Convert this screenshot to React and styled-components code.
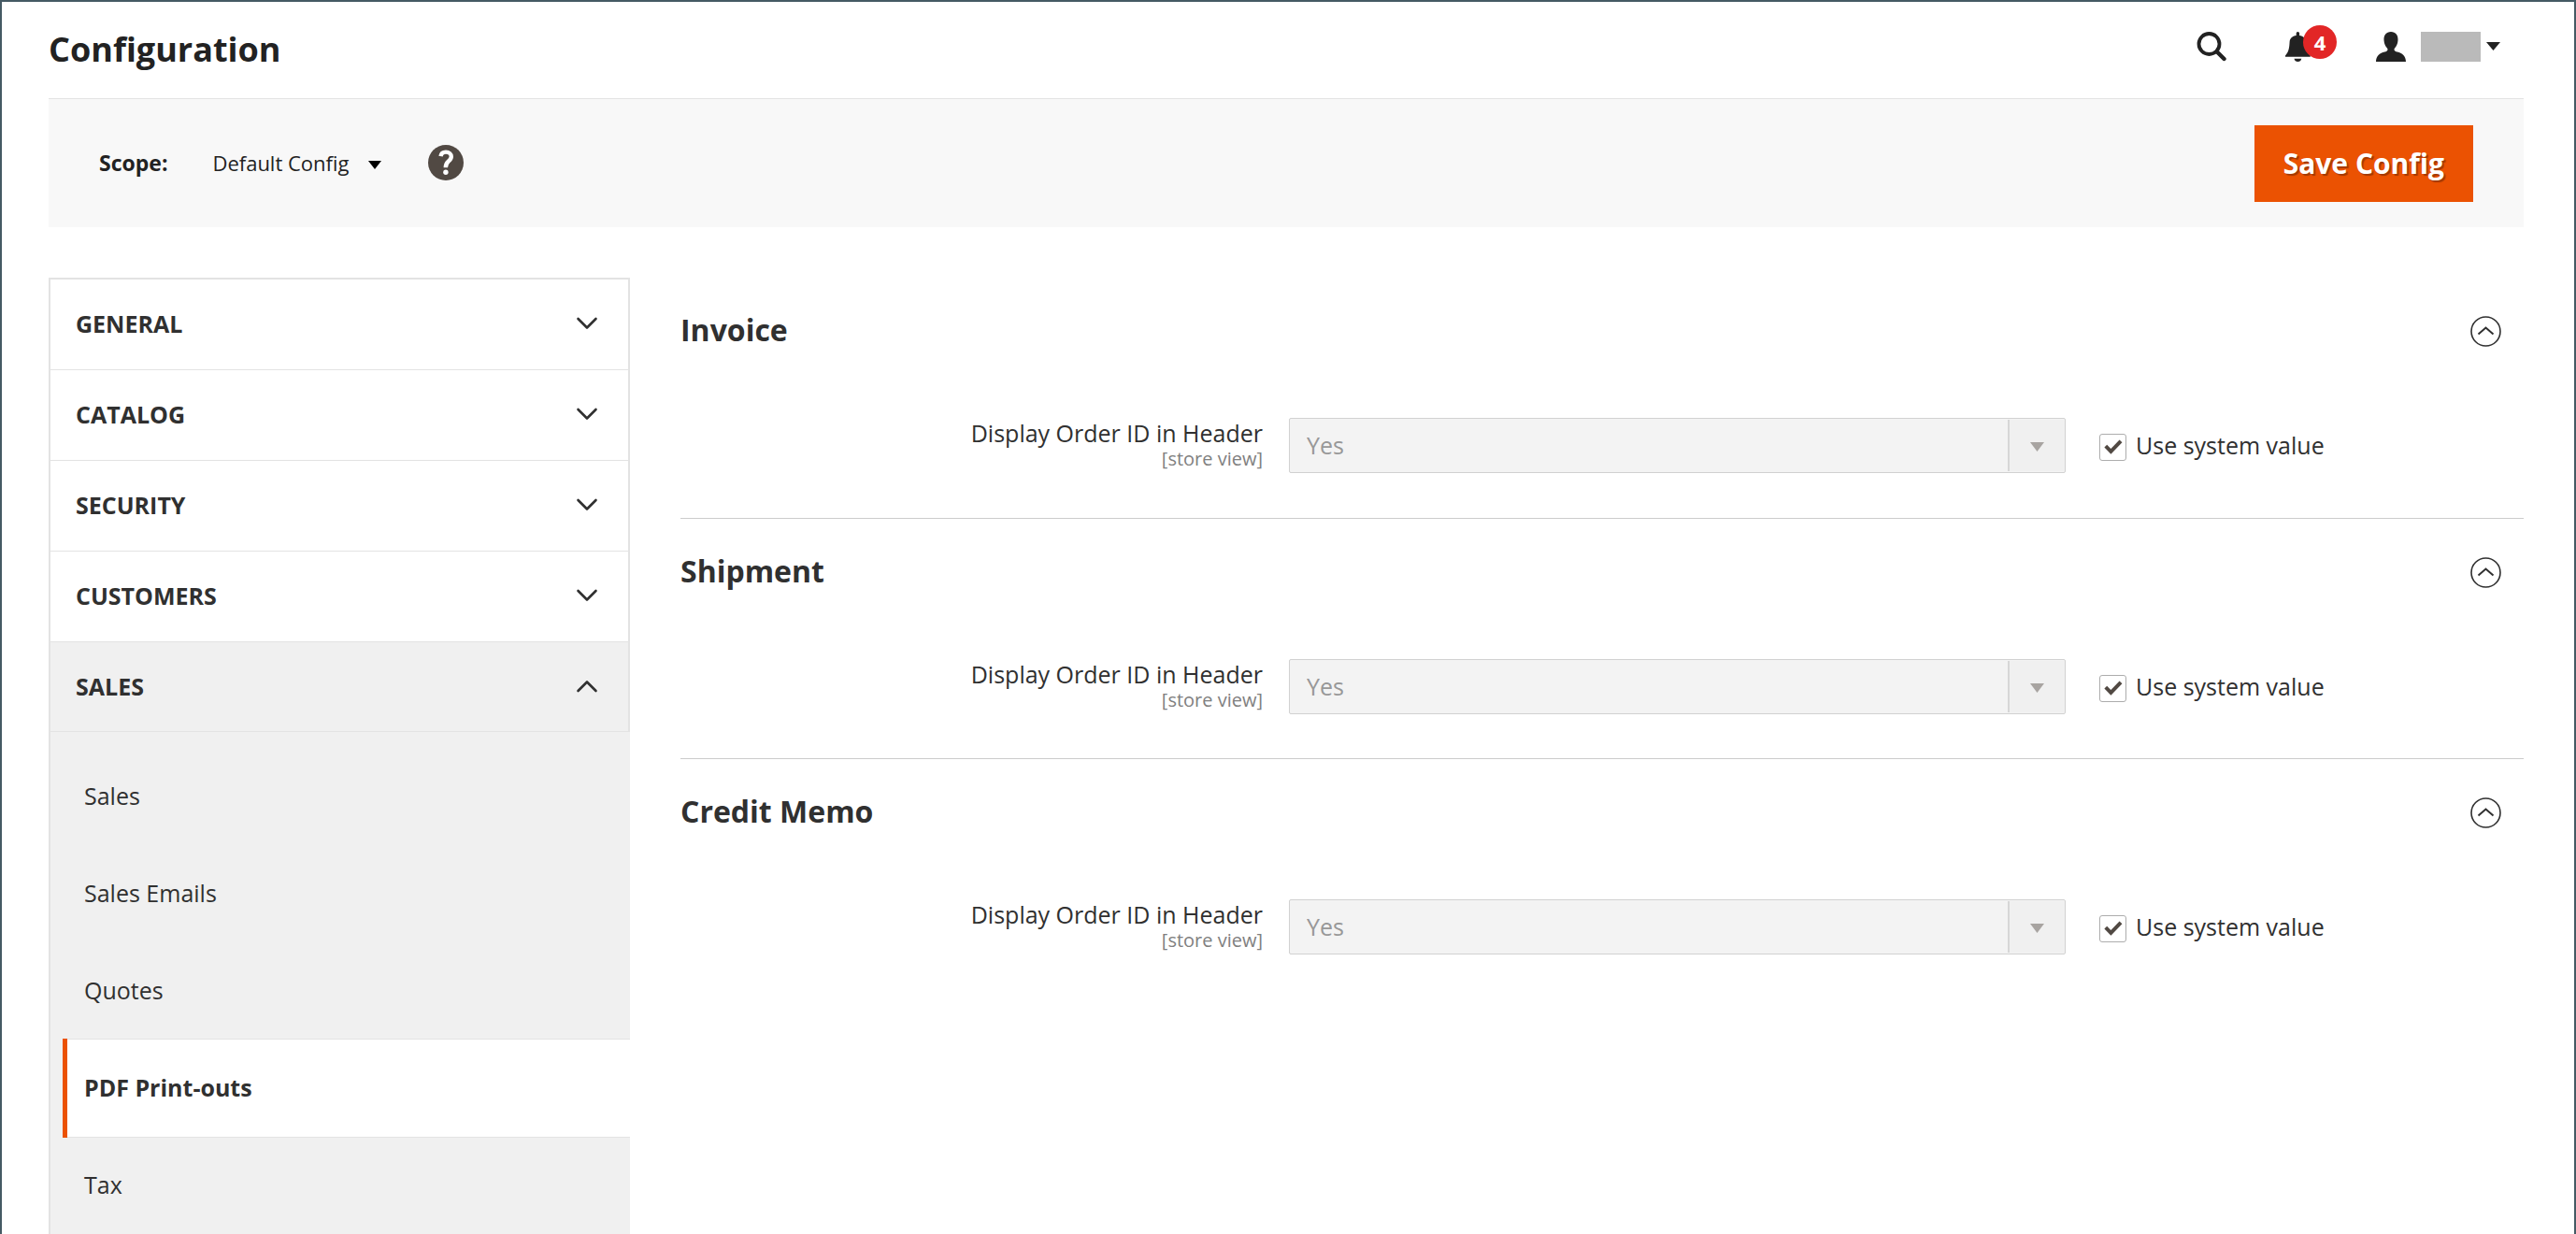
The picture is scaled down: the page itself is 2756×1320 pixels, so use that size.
import React from "react";
import styled, { createGlobalStyle, css } from "styled-components";

const GlobalStyle = createGlobalStyle`
  *, *::before, *::after { box-sizing: border-box; }
  body {
    margin: 0;
    background: #fff;
    color: #303030;
    font-family: "Open Sans", "Noto Sans", sans-serif;
    font-size: 25px;
    line-height: 34px;
  }
  button, select, input { font: inherit; color: inherit; margin: 0; }
`;

const Page = styled.div`
  min-height: 100vh;
  max-height: 100vh;
  overflow: hidden;
  padding: 0 54px 0 50px;
  border: 2px solid #455a64;
  border-bottom: 0;
`;

const Header = styled.header`
  display: flex;
  align-items: center;
  justify-content: space-between;
  height: 103px;
`;

const Title = styled.h1`
  margin: 0;
  padding-bottom: 2px;
  color: #222;
  font-size: 36px;
  font-weight: 700;
  line-height: 48px;
`;

const Tools = styled.div`
  display: flex;
  align-items: center;
  padding: 0 25px 8px 0;
  color: #222;
`;

const IconButton = styled.button`
  display: flex;
  align-items: center;
  position: relative;
  height: 36px;
  padding: 0;
  border: 0;
  background: none;
  margin-right: ${(p) => p.$gap || 0}px;
`;

const Badge = styled.span`
  position: absolute;
  left: 19px;
  top: -5px;
  width: 36px;
  height: 36px;
  border-radius: 50%;
  background: #e22626;
  color: #fff;
  font-size: 22px;
  font-weight: 700;
  line-height: 36px;
  text-align: center;
`;

const UserName = styled.span`
  width: 64px;
  height: 32px;
  margin: 0 6px 0 16px;
  background: #bababa;
`;

const Toolbar = styled.div`
  display: flex;
  align-items: center;
  justify-content: space-between;
  height: 138px;
  padding: 0 54px 0 54px;
  border-top: 1px solid #e3e3e3;
  background: #f8f8f8;
`;

const Scope = styled.div`
  display: flex;
  align-items: center;
  padding-bottom: 2px;
  color: #222;
  font-size: 22px;
`;

const ScopeLabel = styled.label`
  margin-right: 48px;
  font-size: 23px;
  font-weight: 700;
`;

const ScopeSelectBox = styled.div`
  display: flex;
  align-items: center;
  position: relative;
  margin-right: 50px;

  svg {
    position: absolute;
    right: 0;
    top: 15px;
    pointer-events: none;
  }
`;

const ScopeSelect = styled.select`
  appearance: none;
  padding: 0 34px 0 0;
  border: 0;
  background: none;
`;

const SaveButton = styled.button`
  height: 82px;
  padding: 0 31px;
  border: 0;
  background: #eb5202;
  color: #fff;
  font-size: 30px;
  font-weight: 700;
  text-shadow: 2px 2px 1px rgba(0, 0, 0, 0.3);
`;

const Columns = styled.div`
  display: grid;
  grid-template-columns: minmax(0, 622fr) minmax(0, 1972fr);
  column-gap: 54px;
  align-items: start;
  padding-top: 54px;
`;

const Nav = styled.nav`
  border: 2px solid #e3e3e3;
`;

const NavGroup = styled.button`
  display: flex;
  align-items: center;
  justify-content: space-between;
  width: 100%;
  height: ${(p) => (p.$open ? 96 : 97)}px;
  padding: 0 32px 2px 27px;
  border: 0;
  border-bottom: 1px solid #e3e3e3;
  background: ${(p) => (p.$open ? "#f0f0f0" : "#fff")};
  font-weight: 700;
  text-transform: uppercase;
`;

const NavList = styled.ul`
  margin: 0 -2px 0 0;
  padding: 18px 0 60px 13px;
  background: #f0f0f0;
  list-style: none;
`;

const NavLink = styled.a`
  display: flex;
  align-items: center;
  height: 106px;
  margin-top: -2px;
  padding: 0 0 2px 18px;
  border: solid transparent;
  border-width: 1px 0 1px 5px;
  color: inherit;
  text-decoration: none;

  ${(p) =>
    p.$active &&
    css`
      position: relative;
      border-color: #e3e3e3;
      border-left: 0;
      padding-left: 23px;
      background: #fff;
      font-weight: 700;

      &::before {
        content: "";
        position: absolute;
        inset: -1px auto -1px 0;
        width: 5px;
        background: #eb5202;
      }
    `}
`;

const Section = styled.section`
  height: 257px;

  & + & { border-top: 1px solid #ccc; }
`;

const SectionHead = styled.div`
  display: flex;
  align-items: center;
  justify-content: space-between;
  height: 115px;
  padding-right: 24px;
`;

const SectionTitle = styled.h2`
  margin: 0;
  font-size: 32px;
  font-weight: 700;
  line-height: 42px;
  padding-bottom: 4px;
`;

const Field = styled.div`
  display: grid;
  grid-template-columns: minmax(0, 623fr) minmax(0, 831fr) minmax(0, 462fr);
  column-gap: 28px;
  margin-top: 35px;
`;

const FieldLabel = styled.label`
  line-height: 32px;
  text-align: right;
`;

const FieldScope = styled.span`
  display: block;
  color: #808080;
  font-size: 20px;
  line-height: 24px;
`;

const SelectBox = styled.div`
  position: relative;
  height: 59px;

  &::after {
    content: "";
    position: absolute;
    top: 2px;
    bottom: 2px;
    right: 1px;
    width: 61px;
    border-left: 2px solid #d6d6d6;
    background: #f0f0f0;
    pointer-events: none;
  }

  svg {
    position: absolute;
    right: 23px;
    top: 26px;
    z-index: 1;
    pointer-events: none;
  }
`;

const FieldSelect = styled.select`
  appearance: none;
  width: 100%;
  height: 100%;
  padding: 0 70px 2px 18px;
  border: 1px solid #d1d1d1;
  border-radius: 2px;
  background: #f3f3f3;
  opacity: 1;

  &:disabled { color: #989898; }
`;

const Inherit = styled.label`
  display: flex;
  align-items: center;
  gap: 10px;
  height: 59px;
  padding: 0 0 2px 8px;
`;

const CheckBox = styled.span`
  display: grid;
  margin-top: 6px;

  > * { grid-area: 1 / 1; }
  svg { margin: 6px 0 0 5px; pointer-events: none; }
`;

const CheckInput = styled.input`
  appearance: none;
  width: 29px;
  height: 29px;
  border: 1px solid #adadad;
  border-radius: 3px;
  background: #fff;

  &:not(:checked) + svg { display: none; }
`;

const Triangle = ({ width = 14, height = 9, color = "#000" }) => (
  <svg width={width} height={height} viewBox="0 0 14 9" preserveAspectRatio="none" aria-hidden="true">
    <path d="M0 0H14L7 9Z" fill={color} />
  </svg>
);

const Chevron = ({ up }) => (
  <svg width="24" height="14" viewBox="0 0 24 14" fill="none" stroke="#303030" strokeWidth="2.6" strokeLinecap="round" strokeLinejoin="round" aria-hidden="true">
    <path d={up ? "M2.500 12L12 2.500L21.500 12" : "M2.500 2L12 11.500L21.500 2"} />
  </svg>
);

const SearchIcon = () => (
  <svg width="33" height="32" viewBox="0 0 33 32" fill="none" stroke="currentColor" aria-hidden="true">
    <circle cx="13.500" cy="13" r="11" strokeWidth="3.800" />
    <path d="M22 21.500L29.500 29" strokeWidth="4.400" strokeLinecap="round" />
  </svg>
);

const BellIcon = () => (
  <svg width="27" height="32" viewBox="0 0 27 32" fill="currentColor" aria-hidden="true">
    <path d="M11.700 4V1.500Q11.700 0 13.400 0Q15.100 0 15.100 1.500V4C19.500 4.500 21.800 7 22.200 11C22.600 17 22.800 21 26.800 25.500V26.800H0V25.500C4 21 4.200 17 4.600 11C4.900 7 7.300 4.500 11.700 4Z" />
    <path d="M9.500 28.800H17.300Q16.500 32 13.400 32Q10.300 32 9.500 28.800Z" />
  </svg>
);

const UserIcon = () => (
  <svg width="32" height="32" viewBox="0 0 32 32" fill="currentColor" aria-hidden="true">
    <path d="M16 0C21 0 23.800 3.500 23.500 9C23.300 13 21.800 15.500 20 17.500C19 19 19.500 20.500 21.500 21.200C28 22.300 32 26 32 32H0C0 26 4 22.300 10.500 21.200C12.500 20.500 13 19 12 17.500C10.200 15.500 8.700 13 8.500 9C8.200 3.500 11 0 16 0Z" />
  </svg>
);

const HelpIcon = () => (
  <svg width="38" height="38" viewBox="0 0 38 38" aria-hidden="true">
    <circle cx="19" cy="19" r="19" fill="#514943" />
    <path d="M13.500 12.200C14 9 16.200 7.600 19 7.600C22.500 7.600 24.800 9.800 24.800 12.500C24.800 15 23.500 16.200 21.800 17.500C19.800 19.200 18.800 20.500 18.800 24.300" fill="none" stroke="#fff" strokeWidth="4.400" />
    <circle cx="18.900" cy="29.300" r="2.700" fill="#fff" />
  </svg>
);

const CollapseIcon = () => (
  <svg width="33" height="33" viewBox="0 0 33 33" fill="none" stroke="#303030" aria-hidden="true">
    <circle cx="16.500" cy="16.500" r="15.500" strokeWidth="1.600" />
    <path d="M8.500 19.500L16.500 12.500L24.500 19.500" strokeWidth="2" />
  </svg>
);

const CheckIcon = () => (
  <svg width="20" height="16" viewBox="0 0 20 16" aria-hidden="true">
    <path d="M1.800 7.200L7.400 12.800L18 1.800" fill="none" stroke="#514943" strokeWidth="4" />
  </svg>
);

const groups = ["General", "Catalog", "Security", "Customers", "Sales"];
const salesPages = ["Sales", "Sales Emails", "Quotes", "PDF Print-outs", "Tax"];
const sections = ["Invoice", "Shipment", "Credit Memo"];

function ConfigSection({ title }) {
  const id = title.toLowerCase().replace(" ", "-");
  return (
    <Section>
      <SectionHead>
        <SectionTitle>{title}</SectionTitle>
        <IconButton type="button" aria-label={`Collapse ${title}`} aria-expanded="true">
          <CollapseIcon />
        </IconButton>
      </SectionHead>
      <Field>
        <FieldLabel htmlFor={id}>
          Display Order ID in Header
          <FieldScope>[store view]</FieldScope>
        </FieldLabel>
        <SelectBox>
          <FieldSelect id={id} disabled defaultValue="Yes">
            <option>Yes</option>
            <option>No</option>
          </FieldSelect>
          <Triangle width={15} height={10} color="#a8a4a1" />
        </SelectBox>
        <Inherit>
          <CheckBox>
            <CheckInput type="checkbox" defaultChecked />
            <CheckIcon />
          </CheckBox>
          Use system value
        </Inherit>
      </Field>
    </Section>
  );
}

export default function App() {
  return (
    <Page>
      <GlobalStyle />
      <Header>
        <Title>Configuration</Title>
        <Tools>
          <IconButton type="button" aria-label="Search" $gap={62}>
            <SearchIcon />
          </IconButton>
          <IconButton type="button" aria-label="Notifications" $gap={70}>
            <BellIcon />
            <Badge>4</Badge>
          </IconButton>
          <IconButton type="button" aria-label="Account">
            <UserIcon />
            <UserName />
            <Triangle width={15} color="#222" />
          </IconButton>
        </Tools>
      </Header>
      <Toolbar>
        <Scope>
          <ScopeLabel htmlFor="scope">Scope:</ScopeLabel>
          <ScopeSelectBox>
            <ScopeSelect id="scope">
              <option>Default Config</option>
            </ScopeSelect>
            <Triangle />
          </ScopeSelectBox>
          <IconButton type="button" aria-label="Help">
            <HelpIcon />
          </IconButton>
        </Scope>
        <SaveButton type="button">Save Config</SaveButton>
      </Toolbar>
      <Columns>
        <Nav aria-label="Configuration">
          {groups.map((name) => {
            const open = name === "Sales";
            return (
              <NavGroup key={name} type="button" $open={open} aria-expanded={open}>
                {name}
                <Chevron up={open} />
              </NavGroup>
            );
          })}
          <NavList>
            {salesPages.map((name) => (
              <li key={name}>
                <NavLink href="#" $active={name === "PDF Print-outs"}>
                  {name}
                </NavLink>
              </li>
            ))}
          </NavList>
        </Nav>
        <main>
          {sections.map((title) => (
            <ConfigSection key={title} title={title} />
          ))}
        </main>
      </Columns>
    </Page>
  );
}
